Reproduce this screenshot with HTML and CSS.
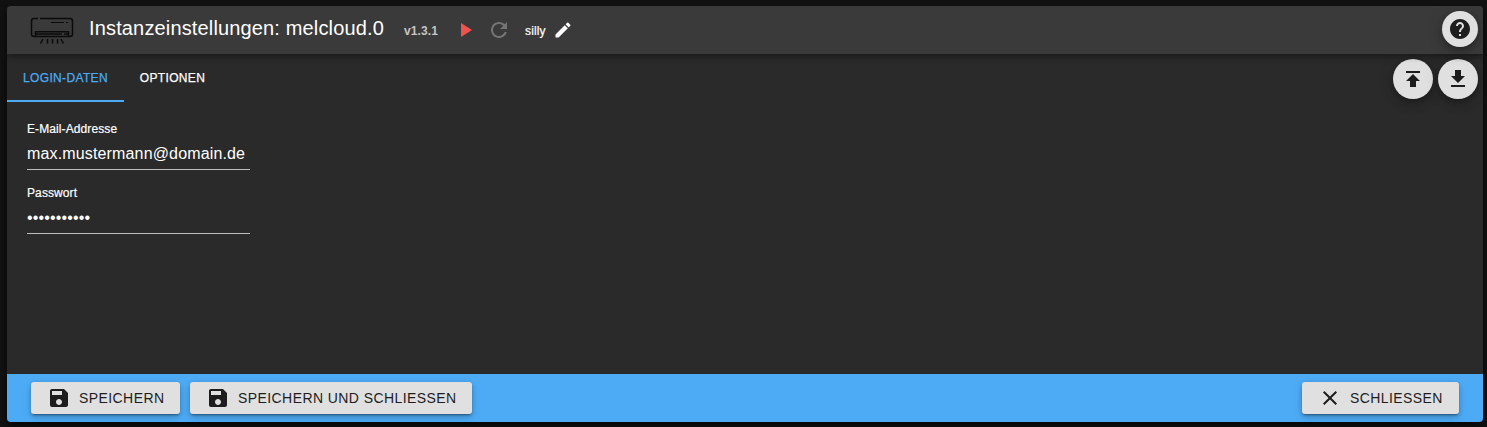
FILE: index.html
```html
<!DOCTYPE html>
<html lang="de">
<head>
<meta charset="utf-8">
<title>Instanzeinstellungen</title>
<link rel="stylesheet" href="styles.css">
</head>
<body>
<main class="panel">
  <header class="bar">
    <svg class="logo" viewBox="0 0 44 28" fill="none" stroke="#0b0b0b" stroke-width="1.500">
      <path d="M8 1.500H4Q1.500 1.500 1.500 4V17Q1.500 19.500 4 19.500H40Q42.500 19.500 42.500 17V4Q42.500 1.500 40 1.500H10"/>
      <path d="M5.500 19V14.700H38.500V19M6 17H32M34 17H38"/>
      <path d="M21 5.500H34M36 5.500H38" stroke-width="1"/>
      <path d="M13 22L10.500 26.500M17.500 22V26.500M22.500 22V26.500M27.500 22V26.500M31 22L33.500 26.500"/>
    </svg>
    <h1 class="title">Instanzeinstellungen: melcloud.0</h1>
    <span class="version">v1.3.1</span>
    <svg class="icon play" viewBox="0 0 24 24"><path d="M8 5v14l11-7z"/></svg>
    <svg class="icon refresh" viewBox="0 0 24 24"><path d="M17.650 6.350C16.200 4.900 14.210 4 12 4c-4.420 0-7.990 3.580-7.990 8s3.570 8 7.990 8c3.730 0 6.840-2.550 7.730-6h-2.080c-.82 2.330-3.040 4-5.650 4-3.310 0-6-2.690-6-6s2.690-6 6-6c1.660 0 3.140.69 4.220 1.780L13 11h7V4l-2.350 2.350z"/></svg>
    <span class="level">silly</span>
    <svg class="icon edit" viewBox="0 0 24 24"><path d="M3 17.250V21h3.750L17.810 9.940l-3.750-3.750L3 17.250zM20.710 7.040c.39-.39.39-1.020 0-1.410l-2.340-2.340c-.39-.39-1.020-.39-1.410 0l-1.830 1.830 3.750 3.750 1.830-1.830z"/></svg>
    <button class="round help" aria-label="Hilfe"><svg class="icon" viewBox="0 0 24 24"><path d="M12 2C6.480 2 2 6.480 2 12s4.480 10 10 10 10-4.480 10-10S17.520 2 12 2zm1 17h-2v-2h2v2zm2.070-7.750l-.9.92C13.450 12.900 13 13.500 13 15h-2v-.5c0-1.100.45-2.100 1.170-2.830l1.240-1.260c.37-.36.59-.86.59-1.410 0-1.100-.9-2-2-2s-2 .9-2 2H8c0-2.210 1.790-4 4-4s4 1.790 4 4c0 .88-.36 1.680-.93 2.250z"/></svg></button>
  </header>
  <section class="content">
    <nav class="tabs">
      <button class="tab active">LOGIN-DATEN</button>
      <button class="tab">OPTIONEN</button>
      <div class="tools">
        <button class="round" aria-label="Import"><svg class="icon" viewBox="0 0 24 24"><path d="M5 4v2h14V4H5zm0 10h4v6h6v-6h4l-7-7-7 7z"/></svg></button>
        <button class="round" aria-label="Export"><svg class="icon" viewBox="0 0 24 24"><path d="M19 9h-4V3H9v6H5l7 7 7-7zM5 18v2h14v-2H5z"/></svg></button>
      </div>
    </nav>
    <form class="form">
      <label class="field"><span class="label">E-Mail-Addresse</span><span class="value">max.mustermann@domain.de</span></label>
      <label class="field"><span class="label">Passwort</span><span class="value">•••••••••••</span></label>
    </form>
  </section>
  <footer class="footer">
    <button class="action save"><svg class="icon" viewBox="0 0 24 24"><path d="M17 3H5c-1.110 0-2 .9-2 2v14c0 1.100.89 2 2 2h14c1.100 0 2-.9 2-2V7l-4-4zm-5 16c-1.660 0-3-1.340-3-3s1.340-3 3-3 3 1.340 3 3-1.340 3-3 3zm3-10H5V5h10v4z"/></svg><span>SPEICHERN</span></button>
    <button class="action save-close"><svg class="icon" viewBox="0 0 24 24"><path d="M17 3H5c-1.110 0-2 .9-2 2v14c0 1.100.89 2 2 2h14c1.100 0 2-.9 2-2V7l-4-4zm-5 16c-1.660 0-3-1.340-3-3s1.340-3 3-3 3 1.340 3 3-1.340 3-3 3zm3-10H5V5h10v4z"/></svg><span>SPEICHERN UND SCHLIESSEN</span></button>
    <button class="action close"><svg class="icon" viewBox="0 0 24 24"><path d="M19 6.410L17.590 5 12 10.590 6.410 5 5 6.410 10.590 12 5 17.590 6.410 19 12 13.410 17.590 19 19 17.590 13.410 12z"/></svg><span>SCHLIESSEN</span></button>
  </footer>
</main>
</body>
</html>
```
FILE: styles.css
```css
* { box-sizing: border-box; }
body {
  margin: 0;
  height: 427px;
  padding: 6px 4px 5px 7px;
  background: #121212;
  color: #fff;
  font-family: "Liberation Sans", Arial, sans-serif;
  overflow: hidden;
}
button { border: 0; margin: 0; font-family: inherit; }
.panel {
  height: 416px;
  display: flex;
  flex-direction: column;
  border-radius: 4px;
  overflow: hidden;
  background: #2a2a2a;
  box-shadow: 0 4px 10px rgba(0,0,0,.7);
}
.bar {
  height: 48px;
  flex: none;
  display: flex;
  align-items: center;
  padding: 0 5px 0 23px;
  background: #3a3a3a;
  box-shadow: 0 2px 4px -1px rgba(0,0,0,.2), 0 4px 5px rgba(0,0,0,.14), 0 1px 10px rgba(0,0,0,.12);
  z-index: 1;
}
.logo { width: 44px; height: 28px; margin-top: 1px; }
.title {
  margin: 0 0 4px 15px;
  width: 295px;
  white-space: nowrap;
  font-size: 20px;
  line-height: 32px;
  font-weight: 400;
  letter-spacing: .15px;
}
.version { width: 49px; margin: 1px 0 0 20px; font-size: 12px; font-weight: 700; color: #c4c4c4; letter-spacing: .1px; }
.icon { width: 24px; height: 24px; fill: currentColor; flex: none; display: block; }
.play { color: #ef5350; }
.refresh { margin-left: 10px; color: #757575; }
.level { width: 22px; margin: 2px 0 0 14px; font-size: 12px; white-space: nowrap; letter-spacing: .15px; -webkit-text-stroke: .2px; }
.edit { width: 20px; height: 20px; margin-left: 6px; }
.round {
  width: 40px;
  height: 40px;
  padding: 0;
  flex: none;
  display: grid;
  place-items: center;
  border-radius: 50%;
  background: #e0e0e0;
  color: #1d1d1d;
  box-shadow: 0 3px 5px -1px rgba(0,0,0,.2), 0 6px 10px rgba(0,0,0,.14), 0 1px 18px rgba(0,0,0,.12);
}
.help { width: 36px; height: 36px; margin: 0 0 2px auto; }
.content { flex: 1; }
.tabs { display: flex; height: 48px; }
.tab {
  height: 48px;
  width: 117px;
  padding: 2px 0 0;
  background: none;
  color: #fff;
  font-size: 12px;
  letter-spacing: .35px;
  -webkit-text-stroke: .25px;
  border-bottom: 2px solid transparent;
}
.tab + .tab { width: 97px; }
.active { color: #4dabf5; border-color: #4dabf5; }
.tools { display: flex; gap: 5px; margin: 5px 5px 0 auto; }
.form { display: grid; gap: 16px; width: 243px; padding: 20px 0 0 20px; }
.field { display: grid; height: 48px; grid-template-rows: 14px 1fr; border-bottom: 1px solid #bdbdbd; }
.label { font-size: 12px; line-height: 14px; letter-spacing: .1px; -webkit-text-stroke: .2px; }
.value { font-size: 16px; line-height: 35px; letter-spacing: .15px; }
.footer {
  height: 48px;
  flex: none;
  display: flex;
  align-items: center;
  gap: 10px;
  padding: 0 24px;
  background: #4dabf5;
}
.action {
  height: 32px;
  display: flex;
  align-items: center;
  gap: 8px;
  padding: 0 0 0 16px;
  border-radius: 3px;
  background: #e0e0e0;
  color: #1d1d1d;
  font-size: 14px;
  letter-spacing: .42px;
  white-space: nowrap;
  box-shadow: 0 3px 1px -2px rgba(0,0,0,.2), 0 2px 2px rgba(0,0,0,.14), 0 1px 5px rgba(0,0,0,.12), 0 4px 8px rgba(0,0,0,.15);
}
.save { width: 149px; }
.save-close { width: 282px; }
.close { width: 157px; margin-left: auto; }
```
